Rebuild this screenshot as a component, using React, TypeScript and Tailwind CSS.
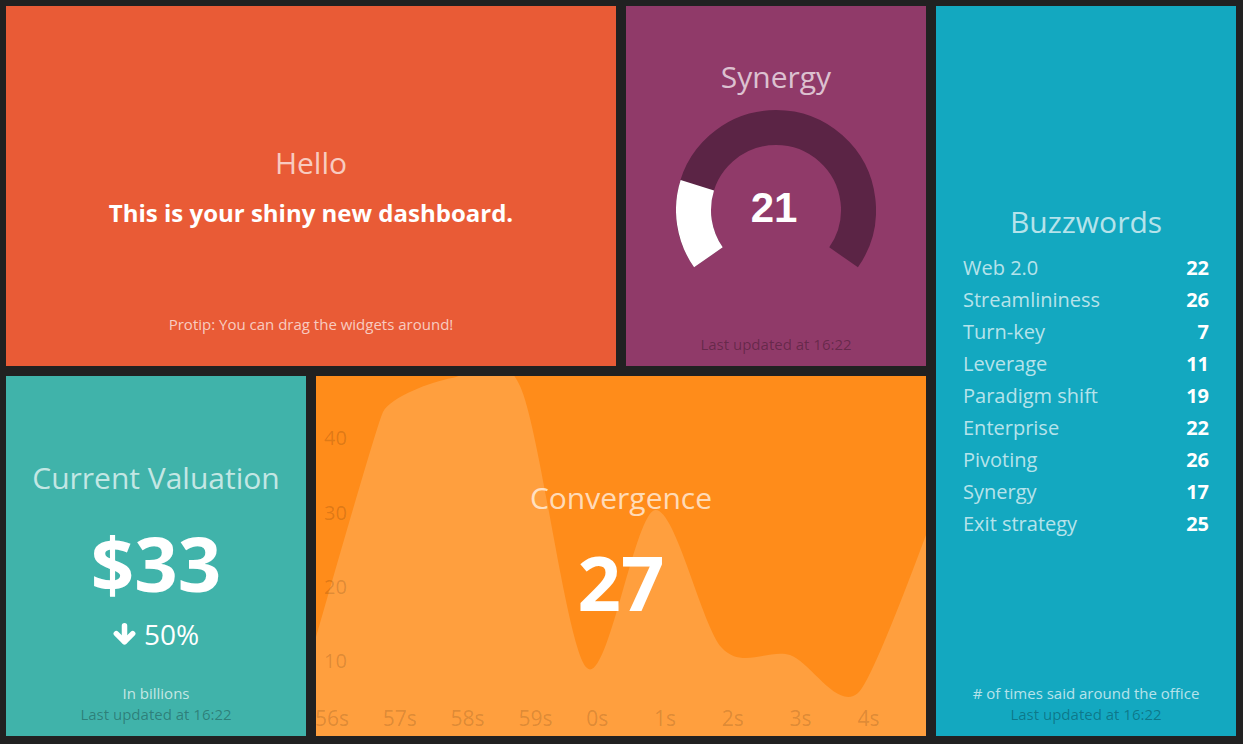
import React from 'react';

type Pt = [number, number];

// local coords inside the 610x360 graph; y-axis is 74.3px per 10 units
// third value scales the tangent (sharper knee where it is small)
const convergence: [number, number, number][] = [
  [0, 261, 1],
  [67, 36, 0.4],
  [136, 2, 1],
  [204, 10, 1],
  [271, 292, 1],
  [339, 134, 1],
  [406, 272, 1],
  [474, 279, 1],
  [542, 317, 1],
  [610, 159, 1],
];

const xTicks = ['56s', '57s', '58s', '59s', '0s', '1s', '2s', '3s', '4s'];
const yTicks = [
  { label: '40', y: 62 },
  { label: '30', y: 137 },
  { label: '20', y: 211 },
  { label: '10', y: 285 },
];

const buzzwords = [
  { label: 'Web 2.0', value: 22 },
  { label: 'Streamlininess', value: 26 },
  { label: 'Turn-key', value: 7 },
  { label: 'Leverage', value: 11 },
  { label: 'Paradigm shift', value: 19 },
  { label: 'Enterprise', value: 22 },
  { label: 'Pivoting', value: 26 },
  { label: 'Synergy', value: 17 },
  { label: 'Exit strategy', value: 25 },
];

// cardinal interpolation like d3's default (tension 0.7)
function cardinalPath(input: [number, number, number][], tension = 0.7) {
  const a = (1 - tension) / 2;
  const points: Pt[] = input.map(([x, y]) => [x, y]);
  const t: Pt[] = input.map((p, i) => {
    const prev = points[Math.max(0, i - 1)];
    const next = points[Math.min(points.length - 1, i + 1)];
    const k = p[2];
    return [a * k * (next[0] - prev[0]), a * k * (next[1] - prev[1])];
  });
  let d = `M${points[0][0]},${points[0][1]}`;
  const p1 = points[1];
  d += `Q${p1[0] - (t[1][0] * 2) / 3},${p1[1] - (t[1][1] * 2) / 3},${p1[0]},${p1[1]}`;
  for (let i = 1; i < points.length - 2; i++) {
    const p = points[i];
    const q = points[i + 1];
    d += `C${p[0] + t[i][0]},${p[1] + t[i][1]},${q[0] - t[i + 1][0]},${q[1] - t[i + 1][1]},${q[0]},${q[1]}`;
  }
  const n = points.length;
  const pl = points[n - 2];
  const last = points[n - 1];
  d += `Q${pl[0] + (t[n - 2][0] * 2) / 3},${pl[1] + (t[n - 2][1] * 2) / 3},${last[0]},${last[1]}`;
  return d;
}

// angle in degrees, clockwise from straight up
function polar(cx: number, cy: number, r: number, deg: number): Pt {
  const rad = (deg * Math.PI) / 180;
  return [cx + r * Math.sin(rad), cy - r * Math.cos(rad)];
}

function arc(cx: number, cy: number, r: number, from: number, to: number) {
  const [x1, y1] = polar(cx, cy, r, from);
  const [x2, y2] = polar(cx, cy, r, to);
  const large = to - from > 180 ? 1 : 0;
  return `M${x1},${y1}A${r},${r},0,${large},1,${x2},${y2}`;
}

function Meter({ value }: { value: number }) {
  const end = -125 + (value / 100) * 250;
  return (
    <svg width="200" height="165" viewBox="0 0 200 165">
      <path d={arc(100, 100, 82.5, -125, 125)} fill="none" stroke="#5b2445" strokeWidth="35" />
      <path d={arc(100, 100, 82.5, -125, end)} fill="none" stroke="#ffffff" strokeWidth="35" />
      <text
        x="98"
        y="112"
        textAnchor="middle"
        fill="#ffffff"
        fontFamily="'Liberation Sans', Arial, sans-serif"
        fontWeight="bold"
        fontSize="42"
      >
        {value}
      </text>
    </svg>
  );
}

function Graph() {
  const line = cardinalPath(convergence);
  const last = convergence[convergence.length - 1];
  const area = `${line}L${last[0]},360L0,360Z`;
  return (
    <svg className="absolute inset-0" width="610" height="360" viewBox="0 0 610 360">
      <path d={area} fill="#ff9f3e" />
      {yTicks.map((t) => (
        <text
          key={t.label}
          x="8"
          y={t.y + 7}
          fill="rgba(0,0,0,0.15)"
          fontFamily="'Open Sans', sans-serif"
          fontSize="20"
        >
          {t.label}
        </text>
      ))}
      {xTicks.map((label, i) => (
        <text
          key={label}
          x={i * 67.8 - 1}
          y="350"
          fill="rgba(0,0,0,0.15)"
          fontFamily="'Open Sans', sans-serif"
          fontSize="21"
        >
          {label}
        </text>
      ))}
    </svg>
  );
}

function ArrowDown() {
  return (
    <svg width="23" height="22" viewBox="0 0 23 22" fill="none" stroke="#fff" strokeWidth="5.5" strokeLinecap="round" strokeLinejoin="round">
      <path d="M11.5 2.8v15.5" />
      <path d="M3.3 10.6l8.2 8.2 8.2-8.2" />
    </svg>
  );
}

export default function App() {
  return (
    <div className="w-full h-[744px] bg-[#212121] font-['Open_Sans',sans-serif] overflow-hidden">
      <div className="grid grid-cols-[repeat(4,300px)] grid-rows-[repeat(2,360px)] gap-[10px] p-[6px]">
        {/* Hello */}
        <section className="col-span-2 bg-[#e95b36] grid grid-rows-[minmax(0,1fr)_auto_minmax(0,1fr)] text-center">
          <div />
          <div className="pt-[2px]">
            <h1 className="text-[30px] leading-[36px] text-white/70">Hello</h1>
            <h3 className="mt-[16px] text-[24px] leading-[32px] font-bold text-white">
              This is your shiny new dashboard.
            </h3>
          </div>
          <div className="flex items-end justify-center pb-[31px]">
            <p className="text-[15px] leading-[21px] text-white/70">Protip: You can drag the widgets around!</p>
          </div>
        </section>

        {/* Synergy */}
        <section className="bg-[#903a69] flex flex-col items-center pt-[53px] pb-[11px]">
          <h1 className="text-[30px] leading-[36px] text-white/70">Synergy</h1>
          <div className="mt-[15px]">
            <Meter value={21} />
          </div>
          <div className="flex-1" />
          <p className="text-[15px] leading-[21px] text-black/30">Last updated at 16:22</p>
        </section>

        {/* Buzzwords */}
        <section className="row-span-2 bg-[#13a8c0] grid grid-rows-[minmax(0,1fr)_auto_minmax(0,1fr)] px-[27px]">
          <div />
          <div className="pt-[1px]">
            <h1 className="text-center text-[30px] leading-[36px] text-white/70">Buzzwords</h1>
            <ul className="mt-[12px]">
              {buzzwords.map((item) => (
                <li key={item.label} className="flex justify-between text-[20px] leading-[32px]">
                  <span className="text-white/70">{item.label}</span>
                  <span className="font-bold text-white">{item.value}</span>
                </li>
              ))}
            </ul>
          </div>
          <div className="flex flex-col items-center justify-end pb-[11px] text-[15px] leading-[21px]">
            <p className="text-white/70"># of times said around the office</p>
            <p className="text-black/30">Last updated at 16:22</p>
          </div>
        </section>

        {/* Current Valuation */}
        <section className="bg-[#40b3aa] grid grid-rows-[minmax(0,1fr)_auto_minmax(0,1fr)] text-center">
          <div />
          <div>
            <h1 className="text-[30px] leading-[36px] text-white/70">Current Valuation</h1>
            <h2 className="mt-[29px] text-[76px] leading-[76px] font-bold text-white">$33</h2>
            <div className="mt-[15px] flex items-center justify-center gap-[8px] h-[36px]">
              <ArrowDown />
              <span className="text-[28px] leading-[36px] text-white">50%</span>
            </div>
          </div>
          <div className="flex flex-col items-center justify-end pb-[11px] text-[15px] leading-[21px]">
            <p className="text-white/70">In billions</p>
            <p className="text-black/30">Last updated at 16:22</p>
          </div>
        </section>

        {/* Convergence */}
        <section className="col-span-2 relative bg-[#ff8c1a] overflow-hidden">
          <Graph />
          <div className="relative h-full flex flex-col items-center justify-center pb-[12px] text-center">
            <h1 className="text-[30px] leading-[36px] text-white/70">Convergence</h1>
            <h2 className="mt-[28px] text-[76px] leading-[76px] font-bold text-white">27</h2>
          </div>
        </section>
      </div>
    </div>
  );
}
